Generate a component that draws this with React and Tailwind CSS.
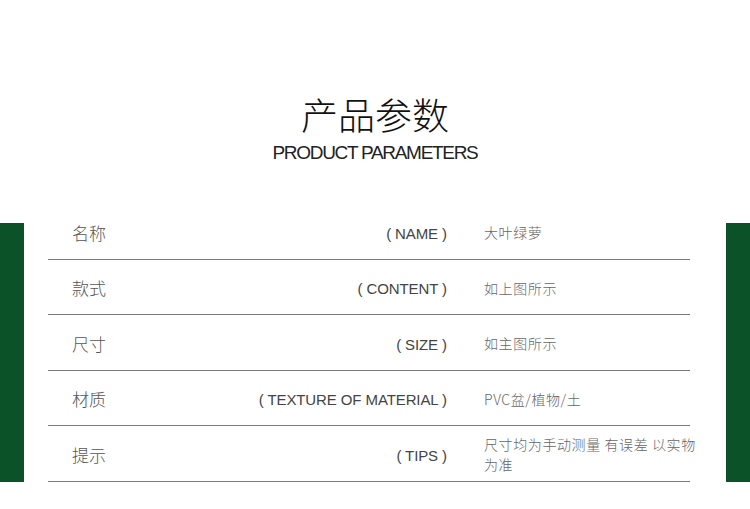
const rows = [
  { label: "名称", en: "( NAME )", value: "大叶绿萝" },
  { label: "款式", en: "( CONTENT )", value: "如上图所示" },
  { label: "尺寸", en: "( SIZE )", value: "如主图所示" },
  { label: "材质", en: "( TEXTURE OF MATERIAL )", value: "PVC盆/植物/土" },
  { label: "提示", en: "( TIPS )", value: "尺寸均为手动测量 有误差 以实物为准" },
];

const cjk = "font-['Noto_Sans_CJK_SC','Noto_Sans',sans-serif]";
const latin = "font-['Liberation_Sans','Noto_Sans_CJK_SC',sans-serif]";

const App = () => {
  return (
    <div className="w-[750px] h-[509px] bg-white overflow-hidden">
      <div className="pt-[96px] flex flex-col items-center">
        <h1 className={`${cjk} text-[37px] leading-[37px] font-light text-[#111]`}>
          产品参数
        </h1>
        <p className={`${latin} mt-[10px] text-[19px] leading-[20px] text-[#222] tracking-[-1.3px]`}>
          PRODUCT PARAMETERS
        </p>
      </div>

      <div className="mt-[41px] flex items-end">
        <div className="w-6 h-[259px] bg-[#0b5229] shrink-0" />
        <div className="ml-6 w-[642px] shrink-0">
          {rows.map((row) => (
            <div
              key={row.label}
              className="h-[55.5px] border-b border-[#7a7a7a] flex items-center pt-[2px]"
            >
              <div className={`${cjk} pl-6 w-[120px] shrink-0 text-[17px] text-[#555] font-light`}>
                {row.label}
              </div>
              <div className={`${latin} w-[279px] shrink-0 pt-[3px] text-right text-[15px] text-[#444] tracking-[-0.1px] whitespace-nowrap`}>
                {row.en}
              </div>
              <div className={`${cjk} ml-[37px] w-[218px] shrink-0 text-[14px] leading-[20px] text-[#666] font-light tracking-[0.6px]`}>
                {row.value}
              </div>
            </div>
          ))}
        </div>
        <div className="ml-auto w-6 h-[259px] bg-[#0b5229] shrink-0" />
      </div>
    </div>
  );
};

export default App;
